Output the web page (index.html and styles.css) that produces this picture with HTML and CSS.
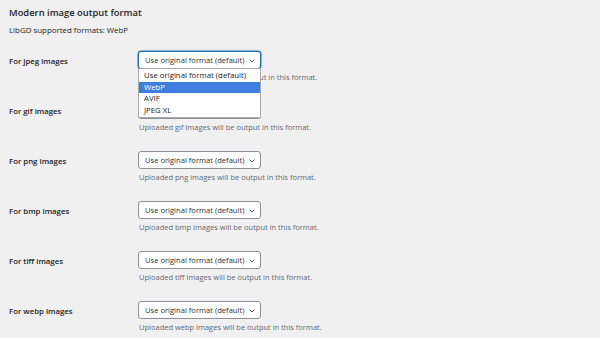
FILE: index.html
```html
<!DOCTYPE html>
<html>
<head>
<meta charset="utf-8">
<link rel="stylesheet" href="styles.css">
</head>
<body>
<div class="wrap">
  <h2 class="title">Modern image output format</h2>
  <p class="support">LibGD supported formats: WebP</p>
  <div class="rows">
    <div class="row">
      <div class="label">For jpeg images</div>
      <div class="field">
        <div class="select focused"><span class="val">Use original format (default)</span><svg class="chev" viewBox="0 0 6 4" width="6" height="4"><path d="M0.6 0.6l2.4 2.4 2.4-2.4" fill="none" stroke="#50575e" stroke-width="1"/></svg></div>
        <p class="desc">Uploaded jpeg images will be output in this format.</p>
        <ul class="list">
          <li>Use original format (default)</li>
          <li class="hl">WebP</li>
          <li>AVIF</li>
          <li>JPEG XL</li>
        </ul>
      </div>
    </div>
    <div class="row">
      <div class="label">For gif images</div>
      <div class="field">
        <div class="select"><span class="val">Use original format (default)</span><svg class="chev" viewBox="0 0 6 4" width="6" height="4"><path d="M0.6 0.6l2.4 2.4 2.4-2.4" fill="none" stroke="#50575e" stroke-width="1"/></svg></div>
        <p class="desc">Uploaded gif images will be output in this format.</p>
      </div>
    </div>
    <div class="row">
      <div class="label">For png images</div>
      <div class="field">
        <div class="select"><span class="val">Use original format (default)</span><svg class="chev" viewBox="0 0 6 4" width="6" height="4"><path d="M0.6 0.6l2.4 2.4 2.4-2.4" fill="none" stroke="#50575e" stroke-width="1"/></svg></div>
        <p class="desc">Uploaded png images will be output in this format.</p>
      </div>
    </div>
    <div class="row">
      <div class="label">For bmp images</div>
      <div class="field">
        <div class="select"><span class="val">Use original format (default)</span><svg class="chev" viewBox="0 0 6 4" width="6" height="4"><path d="M0.6 0.6l2.4 2.4 2.4-2.4" fill="none" stroke="#50575e" stroke-width="1"/></svg></div>
        <p class="desc">Uploaded bmp images will be output in this format.</p>
      </div>
    </div>
    <div class="row">
      <div class="label">For tiff images</div>
      <div class="field">
        <div class="select"><span class="val">Use original format (default)</span><svg class="chev" viewBox="0 0 6 4" width="6" height="4"><path d="M0.6 0.6l2.4 2.4 2.4-2.4" fill="none" stroke="#50575e" stroke-width="1"/></svg></div>
        <p class="desc">Uploaded tiff images will be output in this format.</p>
      </div>
    </div>
    <div class="row">
      <div class="label">For webp images</div>
      <div class="field">
        <div class="select"><span class="val">Use original format (default)</span><svg class="chev" viewBox="0 0 6 4" width="6" height="4"><path d="M0.6 0.6l2.4 2.4 2.4-2.4" fill="none" stroke="#50575e" stroke-width="1"/></svg></div>
        <p class="desc">Uploaded webp images will be output in this format.</p>
      </div>
    </div>
  </div>
</div>
</body>
</html>
```

FILE: styles.css
```css
html, body {
  margin: 0;
  padding: 0;
  background: #f0f0f1;
}
body {
  font-family: "Open Sans", "Noto Sans", sans-serif;
  color: #1d2327;
  width: 600px;
  height: 338px;
  overflow: hidden;
}
.wrap {
  padding-left: 9px;
}
.title {
  margin: 6px 0 0;
  font-size: 9.4px;
  line-height: 14px;
  font-weight: 600;
}
.support {
  margin: 4px 0 0;
  font-size: 7.9px;
  line-height: 12px;
}
.rows {
  margin-top: 15px;
}
.row {
  display: grid;
  grid-template-columns: 129px 1fr;
  height: 50px;
}
.label {
  font-size: 7.8px;
  font-weight: 600;
  line-height: 18px;
  padding-top: 1px;
}
.field {
  position: relative;
}
.select {
  box-sizing: border-box;
  width: 123px;
  height: 18px;
  border: 1px solid #8c8f94;
  border-radius: 3px;
  background: #fff;
  display: flex;
  align-items: center;
  padding: 0 0 0 6px;
  font-size: 7.6px;
  color: #2c3338;
  white-space: nowrap;
}
.val {
  flex: 1;
  white-space: nowrap;
}
.select.focused {
  border-color: #2271b1;
  box-shadow: 0 0 0 0.5px #2271b1;
}
.chev {
  display: block;
  flex-shrink: 0;
  margin-right: 5px;
  margin-top: 1px;
}
.desc {
  margin: 2px 0 0 1px;
  font-size: 7.5px;
  line-height: 12px;
  color: #646970;
}
.list {
  position: absolute;
  left: 0;
  top: 17px;
  width: 123px;
  box-sizing: border-box;
  margin: 0;
  padding: 1px 0;
  list-style: none;
  background: #fff;
  border: 1px solid #a7aaad;
  font-size: 7.8px;
  color: #1d2327;
  z-index: 2;
  white-space: nowrap;
}
.list li {
  height: 11.5px;
  line-height: 11.5px;
  padding-left: 5px;
}
.list li.hl {
  background: #3e7ee0;
  color: #fff;
}
```
